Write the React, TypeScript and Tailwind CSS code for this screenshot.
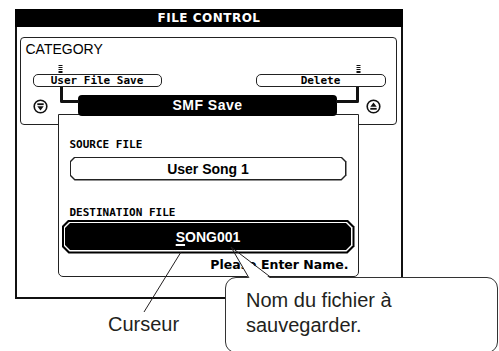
import React from "react";

const lcd = "font-['Liberation_Sans',Arial,sans-serif]";
const dj = "font-['DejaVu_Sans',Verdana,sans-serif]";
const mono = "font-['DejaVu_Sans_Mono','Liberation_Mono',monospace]";

function Bars() {
  return (
    <svg width="5" height="8" viewBox="0 0 5 8" className="block">
      <rect x="0.5" y="0" width="4" height="1" fill="#111" />
      <rect x="0.5" y="2" width="4" height="1" fill="#111" />
      <rect x="0.5" y="4" width="4" height="1" fill="#111" />
      <rect x="0.5" y="6" width="4" height="2" fill="#111" />
    </svg>
  );
}

function RoundArrow({ up }: { up?: boolean }) {
  return (
    <svg width="15" height="15" viewBox="0 0 15 15" className="block">
      <circle cx="7.5" cy="7.5" r="6.3" fill="white" stroke="#111" strokeWidth="1.6" />
      {up ? (
        <>
          <path d="M7.5 3.6 L10.7 7.7 H4.3Z" fill="#111" />
          <rect x="4.3" y="8.9" width="6.4" height="1.8" fill="#111" />
        </>
      ) : (
        <>
          <rect x="4.3" y="4.3" width="6.4" height="1.8" fill="#111" />
          <path d="M4.3 7.3 H10.7 L7.5 11.4Z" fill="#111" />
        </>
      )}
    </svg>
  );
}

export default function App() {
  return (
    <div className="relative w-[499px] h-[351px] bg-white overflow-hidden">
      {/* LCD frame */}
      <div className="ml-[15px] pt-[9px] w-[388px]">
        <div className="h-[18px] bg-black flex items-center justify-center">
          <span className={`${dj} text-white text-[12px] font-bold leading-none tracking-[0.5px]`}>FILE CONTROL</span>
        </div>
        <div className="h-[272px] border-x-2 border-b-2 border-[#111] pt-[10px] pl-[3px]">
          <div className="w-[377px] h-[88px] border-[1.5px] border-[#222] rounded-[4px] pt-[3px] pl-[4.5px] pr-[10.5px]">
            <div className={`${lcd} text-[14px] leading-[16px] text-black`}>CATEGORY</div>
            <div className="flex justify-between pl-[7px] mt-[7.5px]">
              <div className="flex flex-col w-[129px]">
                <div className="pl-[25px]">
                  <Bars />
                </div>
                <div className="mt-[1px] h-[13px] border-[1.5px] border-[#222] rounded-[5px] flex items-center justify-center">
                  <span className={`${mono} text-[11px] font-bold leading-none text-black`}>User File Save</span>
                </div>
                <div className="mt-[12px]">
                  <RoundArrow />
                </div>
              </div>
              <div className="flex flex-col w-[130px]">
                <div className="self-end mr-[25px]">
                  <Bars />
                </div>
                <div className="mt-[1px] h-[13px] border-[1.5px] border-[#222] rounded-[5px] flex items-center justify-center">
                  <span className={`${mono} text-[11px] font-bold leading-none text-black`}>Delete</span>
                </div>
                <div className="mt-[12px] self-end mr-[5px]">
                  <RoundArrow up />
                </div>
              </div>
            </div>
          </div>
        </div>
      </div>

      {/* SMF Save dialog */}
      <div className="absolute left-[58px] top-[95px] w-[301px]">
        <div className="relative z-10 ml-[20px] mr-[22px] h-[21px] pb-[2px] bg-black rounded-[4px] flex items-center justify-center">
          <span className={`${lcd} text-white text-[14px] font-bold leading-none tracking-[0.5px]`}>SMF Save</span>
        </div>
        <div className="-mt-[2px] h-[163px] bg-white border-[1.5px] border-[#222] rounded-b-[5px]">
          <div className={`${mono} ml-[10.5px] mt-[24px] text-[11px] leading-[12px] font-bold text-black`}>SOURCE FILE</div>
          <div className="ml-[10.5px] mt-[5.5px] w-[277px] h-[24px] bg-[#222] p-[1.5px] [clip-path:polygon(5px_0,calc(100%_-_5px)_0,100%_5px,100%_calc(100%_-_5px),calc(100%_-_5px)_100%,5px_100%,0_calc(100%_-_5px),0_5px)]">
            <div className="h-full bg-white flex items-center justify-center [clip-path:polygon(4px_0,calc(100%_-_4px)_0,100%_4px,100%_calc(100%_-_4px),calc(100%_-_4px)_100%,4px_100%,0_calc(100%_-_4px),0_4px)]">
              <span className={`${lcd} text-[14px] font-bold leading-none text-black`}>User Song 1</span>
            </div>
          </div>
          <div className={`${mono} ml-[10.5px] mt-[26.5px] text-[11px] leading-[12px] font-bold text-black`}>DESTINATION FILE</div>
          <div className="ml-[2.5px] mt-[0.5px] w-[293px] h-[34px] bg-black p-[2px] [clip-path:polygon(7px_0,calc(100%_-_7px)_0,100%_7px,100%_calc(100%_-_7px),calc(100%_-_7px)_100%,7px_100%,0_calc(100%_-_7px),0_7px)]">
            <div className="h-full bg-white p-[1.5px] [clip-path:polygon(6px_0,calc(100%_-_6px)_0,100%_6px,100%_calc(100%_-_6px),calc(100%_-_6px)_100%,6px_100%,0_calc(100%_-_6px),0_6px)]">
              <div className="h-full bg-black flex items-center justify-center [clip-path:polygon(5px_0,calc(100%_-_5px)_0,100%_5px,100%_calc(100%_-_5px),calc(100%_-_5px)_100%,5px_100%,0_calc(100%_-_5px),0_5px)]">
                <span className={`${lcd} text-[14px] font-bold leading-none text-white`}>
                  <span className="underline decoration-white decoration-[1.5px] underline-offset-[2px]">S</span>ONG001
                </span>
              </div>
            </div>
          </div>
          <div className={`${dj} mt-[5.5px] mr-[9.5px] text-right text-[12.5px] leading-[12px] font-bold text-black`}>Please Enter Name.</div>
        </div>
      </div>

      {/* callout */}
      <div className="absolute z-10 left-[225px] top-[277px] w-[273px] h-[76px] border border-[#333] rounded-[11px] bg-white pl-[20px] pt-[10px]">
        <p className="font-['Liberation_Sans',Arial,sans-serif] text-[20px] leading-[25px] text-[#231f20]">
          Nom du fichier à
          <br />
          sauvegarder.
        </p>
      </div>

      <div className="absolute z-10 left-[108px] top-[312px] font-['Liberation_Sans',Arial,sans-serif] text-[20px] leading-[25px] text-[#231f20]">
        Curseur
      </div>

      {/* connectors and leader lines */}
      <svg className="absolute inset-0 z-20 pointer-events-none" width="499" height="351" viewBox="0 0 499 351">
        <path d="M61.5 87 V101.5 H79" fill="none" stroke="#111" strokeWidth="3" strokeLinejoin="round" />
        <path d="M357.5 87 V101.5 H336" fill="none" stroke="#111" strokeWidth="3" strokeLinejoin="round" />
        <line x1="144" y1="312" x2="181" y2="252" stroke="#231f20" strokeWidth="1" />
        <polygon points="235,254 240,254 271,279 249,279" fill="white" />
        <line x1="231" y1="247" x2="249" y2="278" stroke="#231f20" strokeWidth="1" />
        <line x1="231" y1="247" x2="271" y2="277.5" stroke="#231f20" strokeWidth="1" />
      </svg>
    </div>
  );
}
